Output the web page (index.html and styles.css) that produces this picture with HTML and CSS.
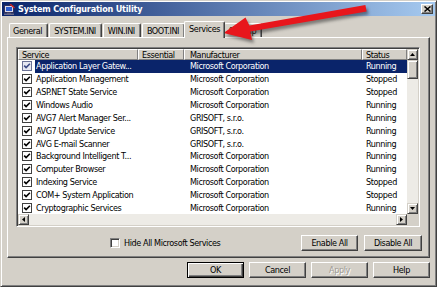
FILE: index.html
```html
<!DOCTYPE html>
<html>
<head>
<meta charset="utf-8">
<link rel="stylesheet" href="styles.css">
</head>
<body>
<svg class="defs" width="0" height="0">
  <symbol id="chk" viewBox="0 0 10 10">
    <rect x="0.5" y="0.5" width="9" height="9" fill="#fff" stroke="#404040"/>
    <path d="M2.2 4.6 L4.1 6.6 L7.9 2.7" fill="none" stroke="#000" stroke-width="1.6"/>
  </symbol>
  <symbol id="chk-sel" viewBox="0 0 10 10">
    <rect x="0.5" y="0.5" width="9" height="9" fill="#e6e8f2" stroke="#6a7296"/>
    <path d="M2.2 4.6 L4.1 6.6 L7.9 2.7" fill="none" stroke="#3c4a86" stroke-width="1.6"/>
  </symbol>
</svg>
<div class="window">
  <div class="titlebar">
    <svg class="appicon" width="11" height="11" viewBox="0 0 11 11">
      <rect x="0.5" y="1.5" width="9" height="7" fill="#d8d8e8" stroke="#30305a"/>
      <rect x="2" y="3" width="6" height="4" fill="#2a5bd0"/>
      <rect x="3" y="8.5" width="4" height="1.5" fill="#505070"/>
      <path d="M6 0 L10.5 4" stroke="#d02020" stroke-width="1.4"/>
      <rect x="0" y="9.5" width="10" height="1.5" fill="#6a6a8a"/>
    </svg>
    <span class="title">System Configuration Utility</span>
    <div class="close">
      <svg width="7" height="6" viewBox="0 0 7 6"><path d="M0.5 0.5 L6.5 5.5 M6.5 0.5 L0.5 5.5" stroke="#000" stroke-width="1.5"/></svg>
    </div>
  </div>
  <div class="content">
    <div class="tabs">
      <div class="tab first-tab">General</div>
      <div class="tab">SYSTEM.INI</div>
      <div class="tab">WIN.INI</div>
      <div class="tab">BOOT.INI</div>
      <div class="tab active">Services</div>
      <div class="tab">Startup</div>
    </div>
    <div class="panel">
      <div class="list">
        <div class="list-top">
          <div class="grid">
            <div class="hdr">
              <div class="h c-svc">Service</div>
              <div class="h c-ess">Essential</div>
              <div class="h c-man">Manufacturer</div>
              <div class="h c-st">Status</div>
            </div>
            <div class="row selected"><div class="chk"><svg><use href="#chk-sel"/></svg></div><div class="sel"><span class="c-name">Application Layer Gatew...</span><span class="c-ess2"></span><span class="c-man2">Microsoft Corporation</span><span class="c-st2">Running</span></div></div>
            <div class="row"><div class="chk"><svg><use href="#chk"/></svg></div><div class="sel"><span class="c-name">Application Management</span><span class="c-ess2"></span><span class="c-man2">Microsoft Corporation</span><span class="c-st2">Stopped</span></div></div>
            <div class="row"><div class="chk"><svg><use href="#chk"/></svg></div><div class="sel"><span class="c-name">ASP.NET State Service</span><span class="c-ess2"></span><span class="c-man2">Microsoft Corporation</span><span class="c-st2">Stopped</span></div></div>
            <div class="row"><div class="chk"><svg><use href="#chk"/></svg></div><div class="sel"><span class="c-name">Windows Audio</span><span class="c-ess2"></span><span class="c-man2">Microsoft Corporation</span><span class="c-st2">Running</span></div></div>
            <div class="row"><div class="chk"><svg><use href="#chk"/></svg></div><div class="sel"><span class="c-name">AVG7 Alert Manager Ser...</span><span class="c-ess2"></span><span class="c-man2">GRISOFT, s.r.o.</span><span class="c-st2">Running</span></div></div>
            <div class="row"><div class="chk"><svg><use href="#chk"/></svg></div><div class="sel"><span class="c-name">AVG7 Update Service</span><span class="c-ess2"></span><span class="c-man2">GRISOFT, s.r.o.</span><span class="c-st2">Running</span></div></div>
            <div class="row"><div class="chk"><svg><use href="#chk"/></svg></div><div class="sel"><span class="c-name">AVG E-mail Scanner</span><span class="c-ess2"></span><span class="c-man2">GRISOFT, s.r.o.</span><span class="c-st2">Running</span></div></div>
            <div class="row"><div class="chk"><svg><use href="#chk"/></svg></div><div class="sel"><span class="c-name">Background Intelligent T...</span><span class="c-ess2"></span><span class="c-man2">Microsoft Corporation</span><span class="c-st2">Running</span></div></div>
            <div class="row"><div class="chk"><svg><use href="#chk"/></svg></div><div class="sel"><span class="c-name">Computer Browser</span><span class="c-ess2"></span><span class="c-man2">Microsoft Corporation</span><span class="c-st2">Running</span></div></div>
            <div class="row"><div class="chk"><svg><use href="#chk"/></svg></div><div class="sel"><span class="c-name">Indexing Service</span><span class="c-ess2"></span><span class="c-man2">Microsoft Corporation</span><span class="c-st2">Stopped</span></div></div>
            <div class="row"><div class="chk"><svg><use href="#chk"/></svg></div><div class="sel"><span class="c-name">COM+ System Application</span><span class="c-ess2"></span><span class="c-man2">Microsoft Corporation</span><span class="c-st2">Stopped</span></div></div>
            <div class="row"><div class="chk"><svg><use href="#chk"/></svg></div><div class="sel"><span class="c-name">Cryptographic Services</span><span class="c-ess2"></span><span class="c-man2">Microsoft Corporation</span><span class="c-st2">Running</span></div></div>
          </div>
          <div class="vscroll">
            <div class="sbtn"><svg width="5" height="3" viewBox="0 0 5 3"><path d="M0 3 L2.5 0 L5 3 Z" fill="#000"/></svg></div>
            <div class="track"><div class="thumb"></div></div>
            <div class="sbtn"><svg width="5" height="3" viewBox="0 0 5 3"><path d="M0 0 L2.5 3 L5 0 Z" fill="#000"/></svg></div>
          </div>
        </div>
        <div class="hscroll">
          <div class="sbtn"><svg width="3" height="5" viewBox="0 0 3 5"><path d="M3 0 L0 2.5 L3 5 Z" fill="#000"/></svg></div>
          <div class="htrack"></div>
          <div class="sbtn"><svg width="3" height="5" viewBox="0 0 3 5"><path d="M0 0 L3 2.5 L0 5 Z" fill="#000"/></svg></div>
          <div class="corner"></div>
        </div>
      </div>
      <div class="actions">
        <label class="hide"><span class="box"></span>Hide All Microsoft Services</label>
        <button class="btn first">Enable All</button>
        <button class="btn">Disable All</button>
      </div>
    </div>
    <div class="dialog-buttons">
      <button class="btn default">OK</button>
      <button class="btn">Cancel</button>
      <button class="btn disabled">Apply</button>
      <button class="btn">Help</button>
    </div>
  </div>
</div>
<svg class="arrow" width="437" height="60" viewBox="0 0 437 60">
  <polygon points="365.4,5 249.4,25.5 245.5,17.5 223.5,33 252,40 250.2,31.5 366.6,11.5" fill="#e8161c"/>
</svg>
</body>
</html>
```
FILE: styles.css
```css
* { box-sizing: border-box; }
html, body { margin: 0; padding: 0; }
body {
  position: relative;
  width: 437px;
  height: 287px;
  overflow: hidden;
  background: #d4d0c8;
  font-family: Tahoma, "DejaVu Sans Condensed", "DejaVu Sans", sans-serif;
  font-size: 9px;
  letter-spacing: -0.4px;
  color: #000;
}
.defs { position: absolute; }
.window {
  width: 437px;
  height: 287px;
  background: #d4d0c8;
  border: 1px solid;
  border-color: #d4d0c8 #404040 #404040 #d4d0c8;
  box-shadow: inset 1px 1px #fff, inset -1px -1px #808080;
  padding: 1px;
  display: flex;
  flex-direction: column;
}
.titlebar {
  height: 14px;
  background: linear-gradient(to right, #0a246a, #a6caf0);
  display: flex;
  align-items: center;
  padding-left: 2px;
}
.appicon { flex: none; }
.title {
  margin-left: 3px;
  color: #fff;
  font-weight: bold;
  font-size: 9px;
  letter-spacing: -0.2px;
  white-space: nowrap;
}
.close {
  margin-left: auto;
  margin-right: 2px;
  width: 12px;
  height: 10px;
  background: #d4d0c8;
  border: 1px solid;
  border-color: #fff #404040 #404040 #fff;
  box-shadow: inset -1px -1px #808080;
  display: flex;
  align-items: center;
  justify-content: center;
}
.content {
  flex: 1;
  padding: 0 5px;
  display: flex;
  flex-direction: column;
}
.tabs {
  margin-top: 5px;
  height: 16px;
  display: flex;
  align-items: flex-end;
  padding-left: 2px;
}
.tab {
  height: 14px;
  padding: 0 5px 0 4px;
  border: 1px solid;
  border-bottom: none;
  border-color: #fff #404040 #fff #fff;
  box-shadow: inset -1px 0 #808080;
  border-radius: 2px 2px 0 0;
  display: flex;
  align-items: center;
  white-space: nowrap;
  margin-right: 1px;
}
.tab.first-tab { padding-left: 3px; }
.tab.active {
  padding: 0 4px 2px 4px;
  margin: 0 -1px -1px -2px;
  position: relative;
  z-index: 1;
  background: #d4d0c8;
  height: 17px;
}
.panel {
  height: 221px;
  border: 1px solid;
  border-color: #fff #404040 #404040 #fff;
  box-shadow: inset -1px -1px #808080;
  padding: 9px 0 0 8px;
  display: flex;
  flex-direction: column;
}
.list {
  width: 404px;
  height: 180px;
  border: 1px solid;
  border-color: #808080 #fff #fff #808080;
  box-shadow: inset 1px 1px #404040, inset -1px -1px #d4d0c8;
  padding: 1px;
  background: #fff;
  display: flex;
  flex-direction: column;
}
.list-top { display: flex; height: 165px; }
.grid { width: 389px; overflow: hidden; }
.hdr { display: flex; height: 11px; }
.h {
  background: #d4d0c8;
  border: 1px solid;
  border-color: #fff #808080 #808080 #fff;
  padding-left: 3px;
  display: flex;
  align-items: center;
  white-space: nowrap;
  overflow: hidden;
}
.c-svc { width: 120px; }
.c-ess { width: 46px; }
.c-man { width: 178px; padding-left: 5px; }
.c-st { width: 45px; }
.row { display: flex; height: 12.86px; align-items: stretch; }
.chk { width: 17px; flex: none; display: flex; align-items: center; padding-left: 4px; }
.chk svg { width: 10px; height: 10px; }
.sel { flex: 1; display: flex; align-items: center; white-space: nowrap; }
.row.selected .sel { background: #0a246a; color: #fff; }
.c-name { width: 103px; padding-left: 1px; overflow: hidden; }
.c-ess2 { width: 46px; }
.c-man2 { width: 178px; padding-left: 6px; }
.c-st2 { width: 45px; padding-left: 4px; }
.vscroll {
  width: 11px;
  display: flex;
  flex-direction: column;
}
.sbtn {
  flex: none;
  width: 11px;
  height: 11px;
  background: #d4d0c8;
  border: 1px solid;
  border-color: #d4d0c8 #404040 #404040 #d4d0c8;
  box-shadow: inset 1px 1px #fff, inset -1px -1px #808080;
  display: flex;
  align-items: center;
  justify-content: center;
}
.track {
  flex: 1;
  background: #edebe6;
}
.thumb {
  height: 19px;
  background: #d4d0c8;
  border: 1px solid;
  border-color: #d4d0c8 #404040 #404040 #d4d0c8;
  box-shadow: inset 1px 1px #fff, inset -1px -1px #808080;
}
.hscroll { display: flex; height: 11px; }
.htrack { flex: 1; background: #edebe6; }
.corner { width: 11px; background: #d4d0c8; }
.actions {
  margin-top: 8px;
  display: flex;
  align-items: center;
  width: 406px;
  height: 16px;
}
.hide {
  margin-left: 94px;
  display: flex;
  align-items: center;
  white-space: nowrap;
}
.box {
  width: 10px;
  height: 10px;
  background: #fff;
  border: 1px solid;
  border-color: #808080 #fff #fff #808080;
  box-shadow: inset 1px 1px #404040, inset -1px -1px #d4d0c8;
  margin-right: 4px;
}
.btn {
  font: inherit;
  letter-spacing: inherit;
  color: #000;
  width: 57px;
  height: 16px;
  padding: 0;
  background: #d4d0c8;
  border: 1px solid;
  border-color: #fff #404040 #404040 #fff;
  box-shadow: inset -1px -1px #808080;
}
.actions .btn.first { margin-left: auto; }
.actions .btn + .btn { margin-left: 6px; width: 58px; }
.dialog-buttons {
  margin-top: 4px;
  display: flex;
  justify-content: flex-end;
  gap: 5px;
}
.btn.default {
  border: 1px solid #000;
  box-shadow: inset 1px 1px #fff, inset -1px -1px #404040, inset -2px -2px #808080;
}
.btn.disabled { color: #a09c94; text-shadow: 1px 1px #fff; }
.arrow {
  position: absolute;
  left: 0;
  top: 0;
  pointer-events: none;
  filter: drop-shadow(2px 3px 1.5px rgba(40, 40, 40, 0.5));
}
```
